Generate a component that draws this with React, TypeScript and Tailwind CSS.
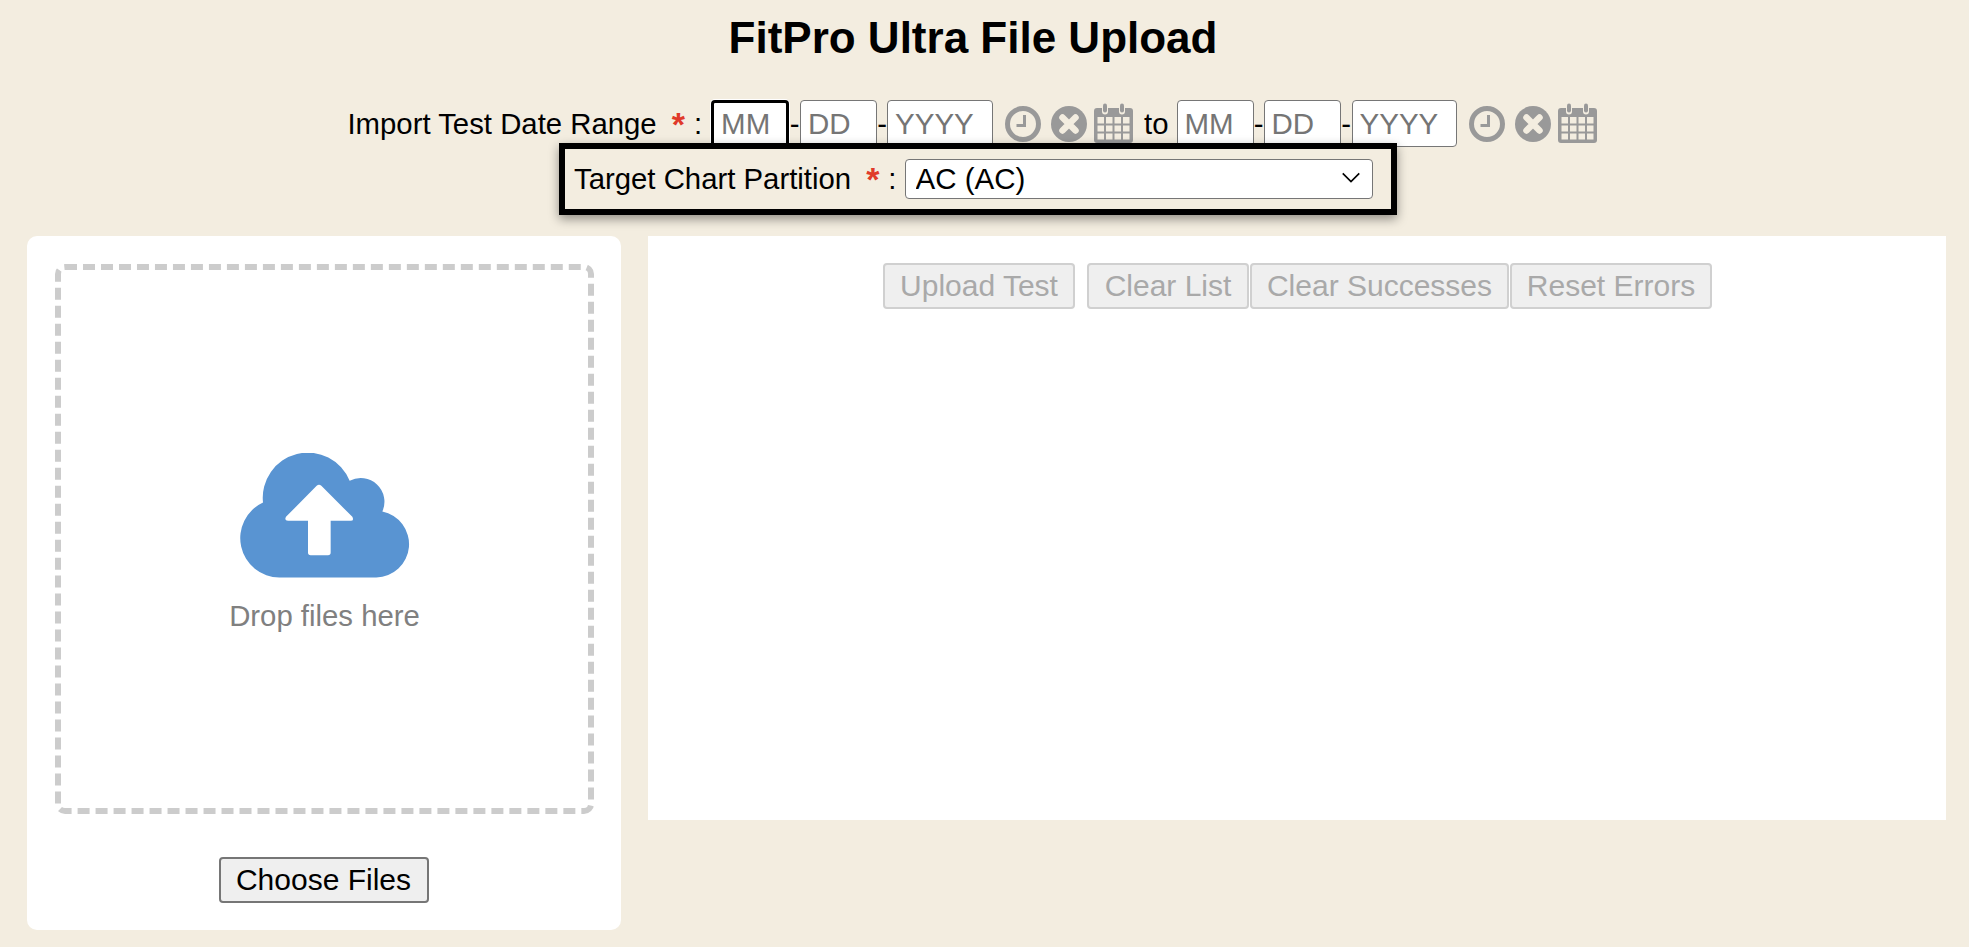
import { useState } from 'react';

const FONT = "font-['Liberation_Sans',Arial,sans-serif]";

function ClockIcon() {
  return (
    <svg viewBox="0 0 36 36" className="w-[36px] h-[36px] shrink-0">
      <circle cx="18" cy="18" r="15.5" fill="none" stroke="#999999" strokeWidth="5" />
      <path d="M19.5 9v10.5H11.5" fill="none" stroke="#999999" strokeWidth="3" />
    </svg>
  );
}

function ClearIcon() {
  return (
    <svg viewBox="0 0 36 36" className="w-[36px] h-[36px] shrink-0">
      <circle cx="18" cy="18" r="18" fill="#999999" />
      <path d="M11.5 11.5l13 13M24.500 11.5l-13 13" stroke="#f3ede0" strokeWidth="6.500" strokeLinecap="round" />
    </svg>
  );
}

function CalendarIcon() {
  return (
    <svg viewBox="0 0 39 40" className="w-[39px] h-[40px] shrink-0">
      <path
        d="M3 5h5v3.500a3 3 0 0 0 6 0V5h11v3.500a3 3 0 0 0 6 0V5h5a3 3 0 0 1 3 3v29a3 3 0 0 1-3 3H3a3 3 0 0 1-3-3V8a3 3 0 0 1 3-3z"
        fill="#999999"
      />
      <rect x="9" y="0.500" width="4" height="9" rx="2" fill="#999999" />
      <rect x="26" y="0.500" width="4" height="9" rx="2" fill="#999999" />
      <g fill="#f3ede0">
        <rect x="3.500" y="14" width="6.500" height="6.500" />
        <rect x="12" y="14" width="6.500" height="6.500" />
        <rect x="20.500" y="14" width="6.500" height="6.500" />
        <rect x="29" y="14" width="6.500" height="6.500" />
        <rect x="3.500" y="22.500" width="6.500" height="6" />
        <rect x="12" y="22.500" width="6.500" height="6" />
        <rect x="20.500" y="22.500" width="6.500" height="6" />
        <rect x="29" y="22.500" width="6.500" height="6" />
        <rect x="3.500" y="30.500" width="6.500" height="6" />
        <rect x="12" y="30.500" width="6.500" height="6" />
        <rect x="20.500" y="30.500" width="6.500" height="6" />
        <rect x="29" y="30.500" width="6.500" height="6" />
      </g>
    </svg>
  );
}

function CloudIcon() {
  return (
    <svg viewBox="118 100 510 374" className="w-[170px] h-[125px]">
      <path
        d="M236 473H527A100 100 0 0 0 545 275A71 71 0 0 0 447 183A135.300 135.300 0 0 0 187 248A118 118 0 0 0 236 473Z"
        fill="#5994d2"
      />
      <path
        d="M348 198Q355 191 362 198L455 291Q461 303 450 303H390V398Q390 406 382 406H330Q322 406 322 398V303H262Q250 303 256 291Z"
        fill="#ffffff"
      />
    </svg>
  );
}

function DateField({ placeholder, width, focused }: { placeholder: string; width: string; focused?: boolean }) {
  return (
    <input
      type="text"
      placeholder={placeholder}
      className={`${width} h-[47px] shrink-0 bg-white rounded-[4px] px-[7px] text-[29.5px] text-black placeholder:text-[#757575] outline-none ${
        focused ? 'border-[3px] border-black px-[5px] shadow-[0_0_0_1px_#ffffff]' : 'border-[1.500px] border-[#767676]'
      }`}
    />
  );
}

function Required() {
  return <span className="text-[#e03a2a] font-bold text-[34px] leading-none ml-[15px] mr-[9px]">*</span>;
}

function DateRange({ first }: { first?: boolean }) {
  return (
    <div className="flex items-center">
      <DateField placeholder="MM" width={first ? 'w-[78px]' : 'w-[77px]'} focused={first} />
      <span className={first ? 'w-[11px] text-center' : 'w-[10px] text-center'}>-</span>
      <DateField placeholder="DD" width="w-[77px]" />
      <span className={first ? 'w-[10px] text-center' : 'w-[11px] text-center'}>-</span>
      <DateField placeholder="YYYY" width={first ? 'w-[106px]' : 'w-[105px]'} />
      <div className="flex items-center ml-[12px] gap-[10px]">
        <ClockIcon />
        <ClearIcon />
      </div>
      <div className="ml-[7px] -mt-[2px]">
        <CalendarIcon />
      </div>
    </div>
  );
}

export default function App() {
  const [partition, setPartition] = useState('AC');

  const actions = [
    { label: 'Upload Test', width: 'w-[192px]', margin: 'mr-[12px]' },
    { label: 'Clear List', width: 'w-[162px]', margin: 'mr-[1px]' },
    { label: 'Clear Successes', width: 'w-[259px]', margin: 'mr-[1px]' },
    { label: 'Reset Errors', width: 'w-[202px]', margin: '' },
  ];

  return (
    <div className={`${FONT} min-h-[947px] bg-[#f3ede0] text-black text-[29.33px] overflow-hidden`}>
      <div className="flex flex-col items-center pr-[23px]">
        <h1 className="text-[44px] leading-[46px] font-bold mt-[15px]">FitPro Ultra File Upload</h1>

        <div className="flex items-center mt-[39px] h-[47px] mr-[2px]">
          <span>Import Test Date Range</span>
          <Required />
          <span className="mr-[9px]">:</span>
          <DateRange first />
          <span className="ml-[11px] mr-[8px]">to</span>
          <DateRange />
        </div>

        <div className="relative ml-[10px] -mt-[4px] w-[838px] h-[72px] flex items-center border-[6px] border-black shadow-[0_4px_10px_rgba(0,0,0,0.4)] pl-[9px]">
          <span>Target Chart Partition</span>
          <Required />
          <span className="mr-[8px]">:</span>
          <div className="relative">
            <select
              value={partition}
              onChange={(e) => setPartition(e.target.value)}
              className="appearance-none w-[468px] h-[40px] bg-white border-[1.500px] border-[#767676] rounded-[4px] pl-[10px] text-[29.5px] leading-[36px] outline-none"
            >
              <option value="AC">AC (AC)</option>
            </select>
            <svg viewBox="0 0 20 12" className="absolute right-[12px] top-[15px] w-[20px] h-[11px] pointer-events-none">
              <path d="M1 1.500l9 9 9-9" fill="none" stroke="#000000" strokeWidth="1.800" />
            </svg>
          </div>
        </div>
      </div>

      <div className="flex items-start gap-[27px] mt-[21px] pl-[27px] pr-[23px]">
        <div className="w-[594px] h-[694px] shrink-0 bg-white rounded-[10px] flex flex-col items-center pt-[28px] pl-[1px]">
          <div className="w-[539px] h-[550px] border-[6px] border-dashed border-[#cccccc] rounded-[10px] flex flex-col items-center justify-center pt-[6px]">
            <CloudIcon />
            <span className="text-[#808080] mt-[22px] leading-[32px]">Drop files here</span>
          </div>
          <button
            type="button"
            className="mt-[43px] mr-[2px] w-[210px] h-[46px] bg-[#efefef] border-2 border-[#767676] rounded-[4px] text-[30px] leading-none"
          >
            Choose Files
          </button>
        </div>

        <div className="flex-1 h-[584px] bg-white flex justify-center pt-[27px] pl-[1px]">
          <div className="flex items-start">
            {actions.map((a) => (
              <button
                key={a.label}
                type="button"
                disabled
                className={`${a.width} ${a.margin} h-[46px] bg-[#efefef] border-2 border-[#d0d0d0] rounded-[4px] text-[#a9a9a9] text-[30px] leading-none`}
              >
                {a.label}
              </button>
            ))}
          </div>
        </div>
      </div>
    </div>
  );
}
